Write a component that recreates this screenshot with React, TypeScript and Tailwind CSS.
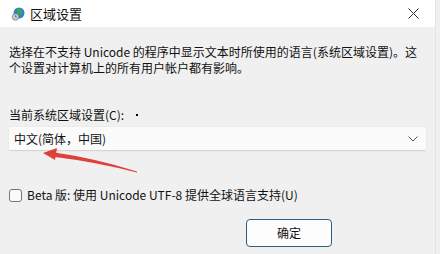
import React from 'react';

const font = { fontFamily: '"Noto Sans CJK SC", "Noto Sans", sans-serif' };

const GlobeIcon: React.FC = () => (
  <svg width="14" height="14" viewBox="0 0 14 14">
    <circle cx="8" cy="6" r="5.5" fill="#2f7fd0" />
    <path d="M5 2.5 C6.5 3 7 4.5 6 5.5 C5 6.5 6.5 7.5 8 7 C9 8.5 10.5 8 11 6.5 C12 5 11 3 9.5 2.2 C8 1.5 6 1.8 5 2.5 Z" fill="#3da84a" />
    <circle cx="4.5" cy="10" r="3.3" fill="#c9cdd2" stroke="#7d848c" strokeWidth="0.8" />
    <path d="M4.5 8.2 V10 H6" stroke="#5b636b" strokeWidth="0.8" fill="none" />
  </svg>
);

const App: React.FC = () => {
  return (
    <div className="w-[440px] h-[254px] bg-[#f0f0f0] relative overflow-hidden text-[#111]" style={font}>
      <div className="w-[436px] h-full flex flex-col border-r border-[#e4e4e4]">
        <header className="h-[27px] bg-white flex items-center pl-[11px] pr-[12px] shrink-0">
          <GlobeIcon />
          <span className="ml-[5px] text-[13px] leading-none">区域设置</span>
          <div className="flex-1" />
          <svg width="11" height="11" viewBox="0 0 11 11" className="mr-[4px]">
            <path d="M0.5 0.5 L10.5 10.5 M10.5 0.5 L0.5 10.5" stroke="#333" strokeWidth="1" />
          </svg>
        </header>

        <main className="flex-1 flex flex-col pl-[9px] pt-[17px]">
          <p className="text-[12px] leading-[16px] whitespace-nowrap">
            选择在不支持 Unicode 的程序中显示文本时所使用的语言(系统区域设置)。这
            <br />
            个设置对计算机上的所有用户帐户都有影响。
          </p>

          <div className="mt-[31px] flex items-center text-[12px] leading-[16px]">
            <span>当前系统区域设置(C):</span>
            <span className="ml-[12px] w-[2px] h-[2px] bg-black" />
          </div>

          <div className="mt-[4px] w-[417px] h-[24px] bg-[#fbfbfb] border-b border-[#d4d4d4] shadow-[0_0_0_1px_#ebebeb] rounded-[2px] flex items-center pl-[5px] pr-[8px]">
            <span className="text-[12px] leading-none">中文(简体，中国)</span>
            <div className="flex-1" />
            <svg width="10" height="6" viewBox="0 0 10 6">
              <path d="M0.5 0.5 L5 5 L9.5 0.5" stroke="#555" strokeWidth="1" fill="none" />
            </svg>
          </div>

          <label className="mt-[36px] flex items-center text-[12px] leading-[16px]">
            <span className="w-[13px] h-[13px] rounded-[3px] border border-[#767676] bg-[#fbfbfb]" />
            <span className="ml-[5px]">Beta 版: 使用 Unicode UTF-8 提供全球语言支持(U)</span>
          </label>

          <div className="mt-[16px] pl-[237px]">
            <button className="w-[86px] h-[28px] rounded-[4px] border border-[#2f5f80] bg-[#fdfdfd] text-[12px] leading-none">
              确定
            </button>
          </div>
        </main>
      </div>

      <svg className="absolute left-0 top-0 pointer-events-none" width="440" height="254">
        <path d="M137 172.6 L137 171.4 Q95 158.2 53 152.2 L53 156.8 Q95 161.8 137 172.6 Z" fill="#e0403a" />
        <path d="M43 153 L57 148 L55 160 Z" fill="#e0403a" />
      </svg>
    </div>
  );
};

export default App;
